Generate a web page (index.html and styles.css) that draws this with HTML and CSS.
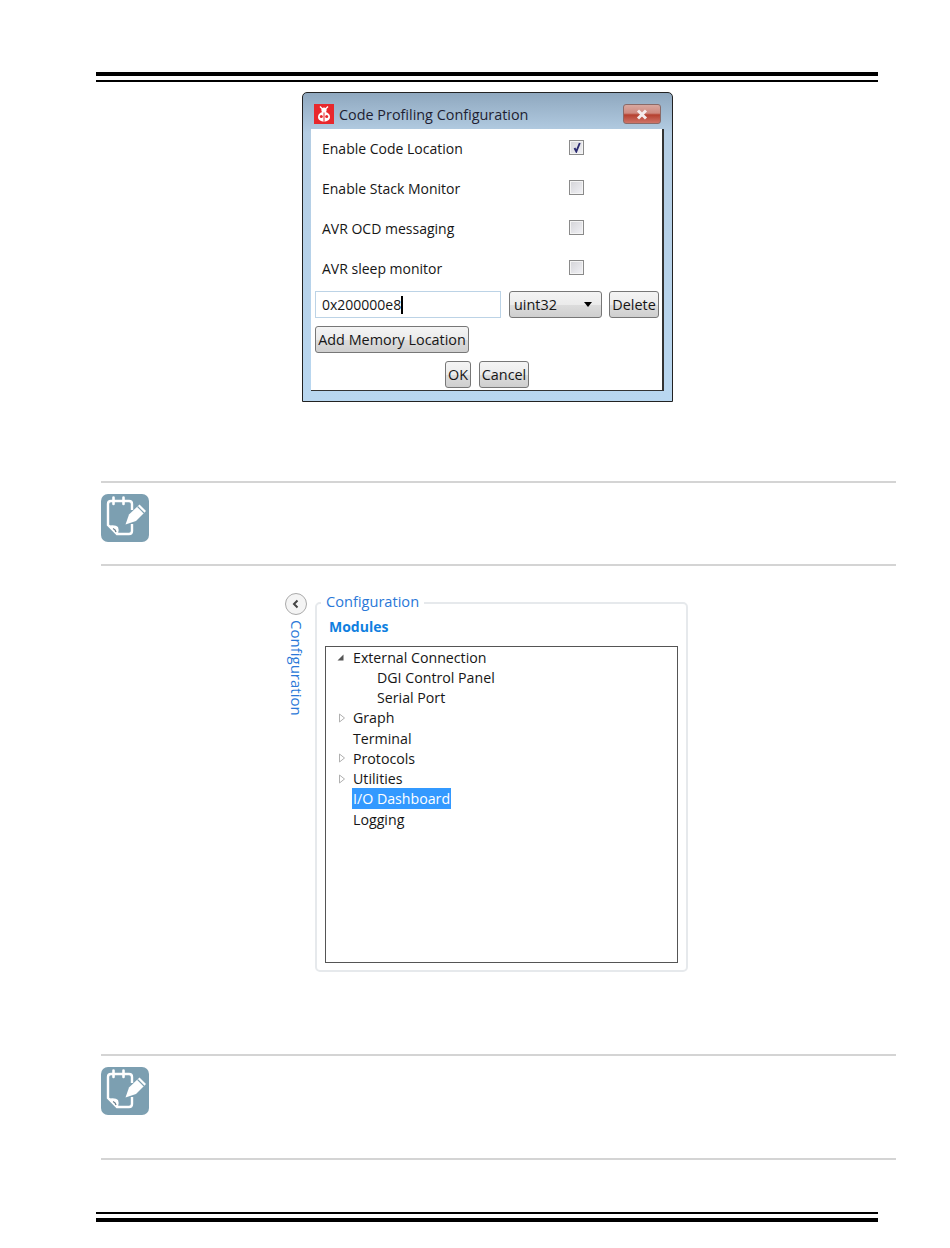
FILE: index.html
```html
<!DOCTYPE html>
<html lang="en">
<head>
    <meta charset="UTF-8">
    <meta name="viewport" content="width=device-width, initial-scale=1.0">
    <title>Code Profiling Configuration</title>
    <link rel="stylesheet" href="styles.css">
</head>
<body>

    <div class="rule-top"></div>

    <!-- Code profiling dialog -->
    <div class="dialog">
        <div class="dialog-title">
            <svg class="app-icon" width="20" height="20" viewBox="0 0 20 20">
                <rect width="20" height="20" fill="#e8282c"/>
                <path d="M6 2.500l2.500 2.500M14 2.500l-2.500 2.500" stroke="#fff" stroke-width="1.400" fill="none"/>
                <circle cx="10" cy="6" r="2.600" fill="#fff"/>
                <path d="M10 8C6.500 8 4 10 4 13c0 2.800 2.700 4.500 6 4.500s6-1.700 6-4.500c0-3-2.500-5-6-5z" fill="#fff"/>
                <path d="M10 8.500v9" stroke="#e8282c" stroke-width="1"/>
                <circle cx="7.300" cy="12.500" r="1.500" fill="#e8282c"/>
                <circle cx="12.700" cy="12.500" r="1.500" fill="#e8282c"/>
            </svg>
            <span class="dialog-name">Code Profiling Configuration</span>
            <div class="close-btn">
                <svg width="16" height="11" viewBox="0 0 16 11">
                    <path d="M4 1.500l8 8M12 1.500l-8 8" stroke="#f4ecec" stroke-width="3"/>
                </svg>
            </div>
        </div>
        <div class="dialog-body">
            <div class="check-row">
                <span class="check-label">Enable Code Location</span>
                <span class="checkbox">
                    <svg width="10" height="11" viewBox="0 0 10 11">
                        <path d="M2.500 6L4.300 9.500L7.800 1" stroke="#2a2a70" stroke-width="1.900" fill="none"/>
                    </svg>
                </span>
            </div>
            <div class="check-row">
                <span class="check-label">Enable Stack Monitor</span>
                <span class="checkbox"></span>
            </div>
            <div class="check-row">
                <span class="check-label">AVR OCD messaging</span>
                <span class="checkbox"></span>
            </div>
            <div class="check-row">
                <span class="check-label">AVR sleep monitor</span>
                <span class="checkbox"></span>
            </div>
            <div class="mem-row">
                <div class="text-input">0x200000e8<span class="caret"></span></div>
                <div class="btn select-btn"><span>uint32</span><span class="arrow"></span></div>
                <div class="btn delete-btn">Delete</div>
            </div>
            <div class="btn add-btn">Add Memory Location</div>
            <div class="ok-row">
                <div class="btn ok-btn">OK</div>
                <div class="btn cancel-btn">Cancel</div>
            </div>
        </div>
    </div>

    <div class="note note-one">
        <svg class="note-icon" width="48" height="48" viewBox="0 0 48 48">
            <rect width="48" height="48" rx="7" fill="#7c9fb1"/>
            <path d="M31 16V10q0-3-3-3H10q-3 0-3 3V31l9 9H28q3 0 3-3V30" fill="none" stroke="#fff" stroke-width="2.400"/>
            <path d="M12.500 3.500v6.500M22.500 3.500v6.500" stroke="#fff" stroke-width="2.600" stroke-linecap="round" fill="none"/>
            <path d="M8 31.500q7-1 9 1.500 1.500 3 0 7z" fill="#fff"/>
            <path d="M12 34.500q2.500 1 3 3.500" stroke="#6b7f8a" stroke-width="1.300" fill="none"/>
            <path d="M24.500 30.500l3.500-10L38.500 10.500 45 17 35 27z" fill="#fff"/>
            <path d="M36.500 12.500l6.500 6.500" stroke="#7c9fb1" stroke-width="1.100"/>
        </svg>
    </div>

    <!-- Configuration panel -->
    <div class="config">
        <div class="side-tab">
            <div class="collapse-btn">
                <svg width="10" height="10" viewBox="0 0 10 10">
                    <path d="M6.500 1.500L3 5l3.500 3.500" stroke="#444" stroke-width="2" fill="none"/>
                </svg>
            </div>
            <div class="side-label">Configuration</div>
        </div>
        <div class="group-box">
            <div class="group-legend">Configuration</div>
            <div class="group-title">Modules</div>
            <div class="tree">
                <div class="tree-item">
                    <svg class="twist" width="17" height="10" viewBox="0 0 17 10"><path d="M1.500 8.500L7.500 2.500V8.500z" fill="#555"/></svg>
                    External Connection
                </div>
                <div class="tree-item child">DGI Control Panel</div>
                <div class="tree-item child">Serial Port</div>
                <div class="tree-item">
                    <svg class="twist" width="17" height="10" viewBox="0 0 17 10"><path d="M3.500 1L8.500 5L3.500 9z" fill="#fff" stroke="#b0b0b0"/></svg>
                    Graph
                </div>
                <div class="tree-item"><span class="twist"></span>Terminal</div>
                <div class="tree-item">
                    <svg class="twist" width="17" height="10" viewBox="0 0 17 10"><path d="M3.500 1L8.500 5L3.500 9z" fill="#fff" stroke="#b0b0b0"/></svg>
                    Protocols
                </div>
                <div class="tree-item">
                    <svg class="twist" width="17" height="10" viewBox="0 0 17 10"><path d="M3.500 1L8.500 5L3.500 9z" fill="#fff" stroke="#b0b0b0"/></svg>
                    Utilities
                </div>
                <div class="tree-item"><span class="twist"></span><span class="selected">I/O Dashboard</span></div>
                <div class="tree-item"><span class="twist"></span>Logging</div>
            </div>
        </div>
    </div>

    <div class="note note-two">
        <svg class="note-icon" width="48" height="48" viewBox="0 0 48 48">
            <rect width="48" height="48" rx="7" fill="#7c9fb1"/>
            <path d="M31 16V10q0-3-3-3H10q-3 0-3 3V31l9 9H28q3 0 3-3V30" fill="none" stroke="#fff" stroke-width="2.400"/>
            <path d="M12.500 3.500v6.500M22.500 3.500v6.500" stroke="#fff" stroke-width="2.600" stroke-linecap="round" fill="none"/>
            <path d="M8 31.500q7-1 9 1.500 1.500 3 0 7z" fill="#fff"/>
            <path d="M12 34.500q2.500 1 3 3.500" stroke="#6b7f8a" stroke-width="1.300" fill="none"/>
            <path d="M24.500 30.500l3.500-10L38.500 10.500 45 17 35 27z" fill="#fff"/>
            <path d="M36.500 12.500l6.500 6.500" stroke="#7c9fb1" stroke-width="1.100"/>
        </svg>
    </div>

    <div class="rule-bottom"></div>

</body>
</html>
```

FILE: styles.css
```css
body {
    margin: 0;
    padding: 72px 0 0 0;
    height: 1176px;
    background: #fff;
    font-family: 'Open Sans', 'Noto Sans', sans-serif;
    font-size: 14px;
    color: #161616;
    overflow: hidden;
}
.rule-top {
    margin-left: 96px;
    width: 782px;
    height: 4px;
    border-top: 4px solid #000;
    border-bottom: 2px solid #000;
}
.rule-bottom {
    margin-left: 96px;
    margin-top: 52px;
    width: 782px;
    height: 4px;
    border-top: 2px solid #000;
    border-bottom: 4px solid #000;
}

/* dialog */
.dialog {
    margin: 10px 0 0 302px;
    width: 371px;
    height: 310px;
    box-sizing: border-box;
    border: 1px solid #222;
    border-radius: 5px 5px 0 0;
    background: linear-gradient(#8fa8bf 0, #b4cde3 40px, #b9d7f0 100%);
    padding: 0 8px 10px 8px;
}
.dialog-title {
    display: flex;
    align-items: center;
    height: 36px;
    margin-left: 3px;
}
.app-icon {
    margin-top: 6px;
}
.dialog-name {
    margin: 6px 0 0 5px;
    font-size: 14.400px;
    color: #1e1e32;
    flex: 1;
}
.close-btn {
    width: 38px;
    height: 20px;
    margin: 6px 3px 0 0;
    box-sizing: border-box;
    border: 1px solid #8a6a68;
    border-radius: 3px;
    background: linear-gradient(#d8a8a0 0, #cf8a80 45%, #b5402f 55%, #cf7468 100%);
    display: flex;
    align-items: center;
    justify-content: center;
}
.dialog-body {
    background: #fff;
    height: 262px;
    border-right: 2px solid #333;
    border-bottom: 1px solid #333;
    box-sizing: border-box;
    padding: 0 0 0 4px;
}
.check-row {
    display: flex;
    align-items: center;
    height: 40px;
    padding-left: 7px;
}
.check-label {
    width: 247px;
    margin-top: -2px;
}
.checkbox {
    width: 13px;
    height: 13px;
    border: 1px solid #8a8a8a;
    background: linear-gradient(135deg, #d4d4d8, #f2f2f6);
    box-shadow: inset 0 0 0 1px #f4f4f4;
    display: flex;
    align-items: center;
    justify-content: center;
    margin-top: -3px;
}
.mem-row {
    display: flex;
    margin-top: 2px;
    height: 27px;
}
.text-input {
    width: 186px;
    box-sizing: border-box;
    border: 1px solid #bcd3e6;
    padding-left: 6px;
    line-height: 26px;
    display: flex;
    align-items: center;
}
.caret {
    width: 2px;
    height: 18px;
    background: #000;
}
.btn {
    box-sizing: border-box;
    border: 1px solid #777;
    border-radius: 3px;
    background: linear-gradient(#f4f4f4 0, #ebebeb 50%, #dcdcdc 52%, #cfcfcf 100%);
    height: 27px;
    line-height: 26px;
    text-align: center;
    white-space: nowrap;
    font-size: 14.400px;
}
.select-btn {
    width: 93px;
    margin-left: 8px;
    display: flex;
    justify-content: space-between;
    align-items: center;
    padding: 0 9px 0 4px;
}
.arrow {
    width: 0;
    height: 0;
    border-left: 4px solid transparent;
    border-right: 4px solid transparent;
    border-top: 5px solid #000;
}
.delete-btn {
    width: 50px;
    margin-left: 7px;
}
.add-btn {
    width: 154px;
    margin-top: 8px;
}
.ok-row {
    display: flex;
    margin: 8px 0 0 130px;
    gap: 8px;
}
.ok-btn {
    width: 26px;
}
.cancel-btn {
    width: 50px;
}

/* notes */
.note {
    margin-left: 101px;
    width: 795px;
    box-sizing: border-box;
    border-top: 2px solid #d4d4d4;
    border-bottom: 2px solid #d4d4d4;
    padding-top: 11px;
}
.note-one {
    margin-top: 79px;
    height: 85px;
}
.note-two {
    margin-top: 82px;
    height: 106px;
}
.note-icon {
    display: block;
}

/* configuration panel */
.config {
    display: flex;
    margin: 36px 0 0 285px;
    height: 370px;
}
.side-tab {
    width: 30px;
}
.collapse-btn {
    width: 20px;
    height: 20px;
    border: 1px solid #aaa;
    border-radius: 50%;
    background: #f4f4f4;
    display: flex;
    align-items: center;
    justify-content: center;
    margin-top: -9px;
}
.side-label {
    writing-mode: vertical-rl;
    color: #2a78d8;
    margin: 5px 0 0 2px;
    font-size: 15px;
    line-height: 20px;
}
.group-box {
    position: relative;
    width: 373px;
    box-sizing: border-box;
    border: 2px solid #e6e9ec;
    border-radius: 5px;
    padding: 13px 8px 7px 8px;
}
.group-legend {
    position: absolute;
    top: -13px;
    left: 4px;
    background: #fff;
    padding: 0 5px;
    color: #2a78d8;
    font-size: 14.600px;
    line-height: 20px;
}
.group-title {
    color: #0f7fe0;
    font-weight: 700;
    font-size: 14px;
    line-height: 20px;
    margin: 0 0 9px 4px;
}
.tree {
    border: 1px solid #555;
    height: 317px;
    box-sizing: border-box;
}
.tree-item {
    display: flex;
    align-items: center;
    height: 20.250px;
    padding-left: 10px;
    font-size: 14.200px;
}
.tree-item.child {
    padding-left: 51px;
}
.twist {
    display: block;
    width: 17px;
    height: 10px;
    flex: none;
}
.selected {
    background: #3399ff;
    color: #fff;
    margin-left: -1px;
    padding: 0 1px;
    line-height: 21px;
}
```
